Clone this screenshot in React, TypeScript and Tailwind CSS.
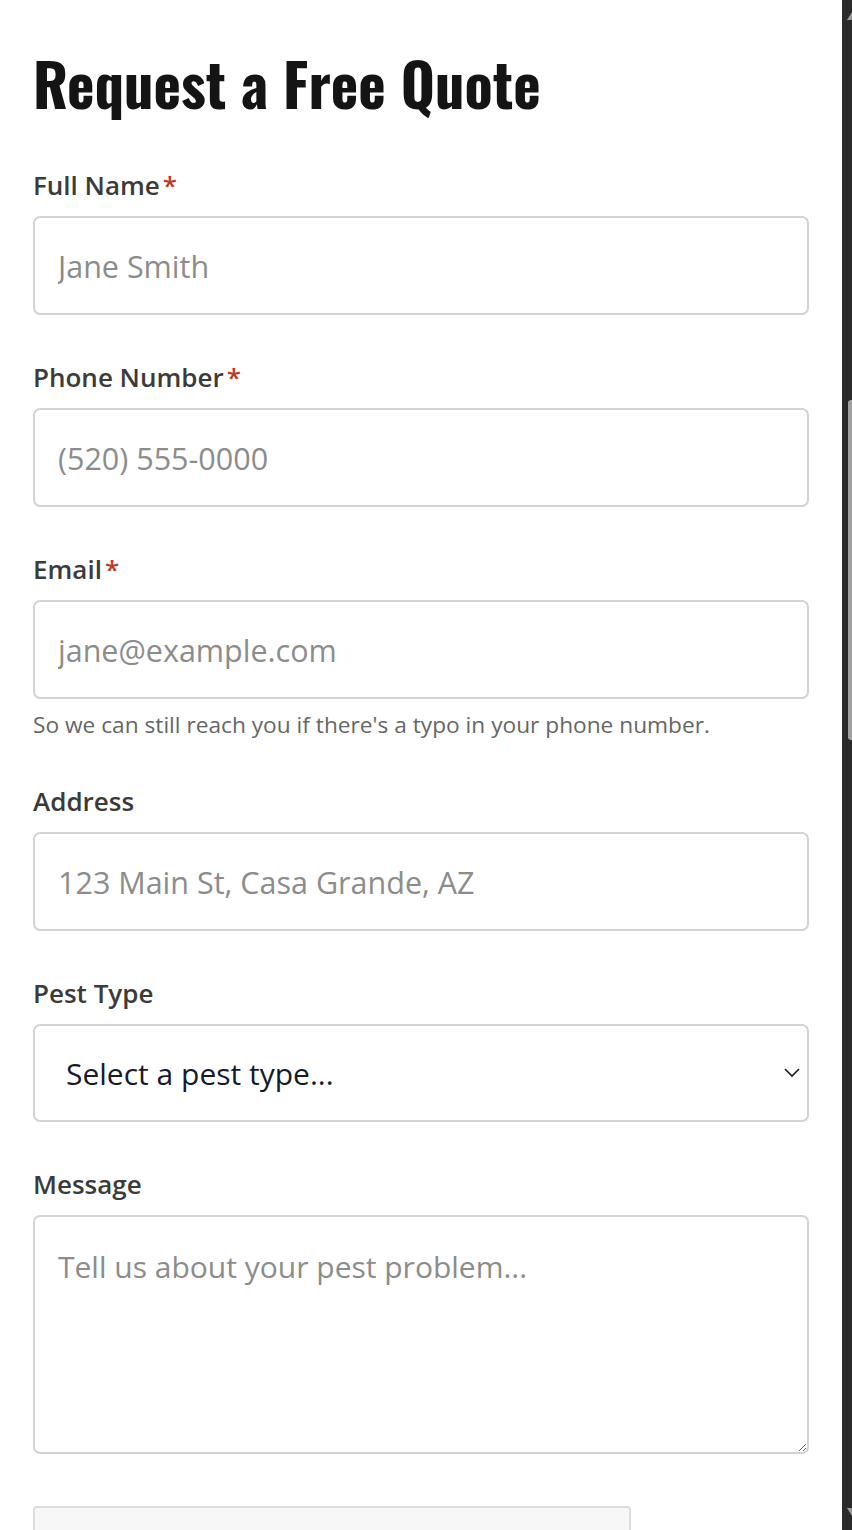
import React from 'react';

const bodyFont = { fontFamily: '"Open Sans", "Noto Sans", sans-serif' };

function Label({ text, required }: { text: string; required?: boolean }) {
  return (
    <label className="block text-[26px] leading-[36px] font-semibold text-[#3b3b3b] mb-[13px]">
      {text}
      {required && <span className="text-[#c0392b] ml-[3px]">*</span>}
    </label>
  );
}

const inputCls =
  'block w-full h-[99px] px-[23px] text-[30.5px] text-[#222] bg-white border-2 border-[#d3d3d3] rounded-[7px] outline-none placeholder:text-[#8c8c8c]';

export default function App() {
  return (
    <div className="flex h-[1530px] overflow-hidden bg-white" style={bodyFont}>
      <main className="flex-1 px-[33px] pt-[43px]">
        <h1
          className="text-[58.5px] leading-[80px] font-bold text-[#141414] mb-[44px]"
          style={{ fontFamily: '"Oswald", "Liberation Sans Narrow", "DejaVu Sans Condensed", "Roboto Condensed", sans-serif' }}
        >
          Request a Free Quote
        </h1>

        <form className="flex flex-col gap-[44px]">
          <div>
            <Label text="Full Name" required />
            <input className={inputCls} placeholder="Jane Smith" />
          </div>
          <div>
            <Label text="Phone Number" required />
            <input className={inputCls} placeholder="(520) 555-0000" />
          </div>
          <div>
            <Label text="Email" required />
            <input className={inputCls} placeholder="jane@example.com" />
            <p className="mt-[12px] text-[22.7px] leading-[28px] text-[#666]">
              So we can still reach you if there's a typo in your phone number.
            </p>
          </div>
          <div>
            <Label text="Address" />
            <input className={inputCls} placeholder="123 Main St, Casa Grande, AZ" />
          </div>
          <div>
            <Label text="Pest Type" />
            <div className="relative">
              <select
                className="block w-full h-[98px] pl-[31px] pr-[60px] text-[30px] text-[#151a30] bg-white border-2 border-[#d3d3d3] rounded-[7px] outline-none appearance-none"
                defaultValue=""
              >
                <option value="">Select a pest type...</option>
                <option>Ants</option>
                <option>Scorpions</option>
                <option>Termites</option>
              </select>
              <svg
                className="absolute right-[8px] top-[42px] w-[18px] h-[12px] pointer-events-none"
                viewBox="0 0 18 12"
                fill="none"
                stroke="#222"
                strokeWidth="1.7"
              >
                <path d="M2 3l7 7 7-7" />
              </svg>
            </div>
          </div>
          <div>
            <Label text="Message" />
            <textarea
              className="block w-full h-[239px] px-[23px] py-[28px] text-[30px] leading-[44px] text-[#222] bg-white border-2 border-[#d3d3d3] rounded-[7px] outline-none placeholder:text-[#8c8c8c]"
              placeholder="Tell us about your pest problem..."
            />
          </div>
          <div className="mt-[8px] w-[598px] h-[80px] bg-[#f7f7f7] border-2 border-[#dcdcdc] rounded-[4px]" />
        </form>
      </main>

      <aside className="w-[10px] bg-[#2b2b2b] flex flex-col">
        <svg className="ml-[5px] mt-[12px] w-[5px] h-[8px]" viewBox="0 0 5 8">
          <path d="M5 0L0 8h5z" fill="#9a9a9a" />
        </svg>
        <div className="ml-[6px] mt-[380px] h-[340px] bg-[#a0a0a0] rounded-tl-[3px] rounded-bl-[3px]" />
        <div className="flex-1" />
        <svg className="ml-[5px] mb-[14px] w-[5px] h-[8px]" viewBox="0 0 5 8">
          <path d="M0 0h5v8z" fill="#9a9a9a" />
        </svg>
      </aside>
    </div>
  );
}
